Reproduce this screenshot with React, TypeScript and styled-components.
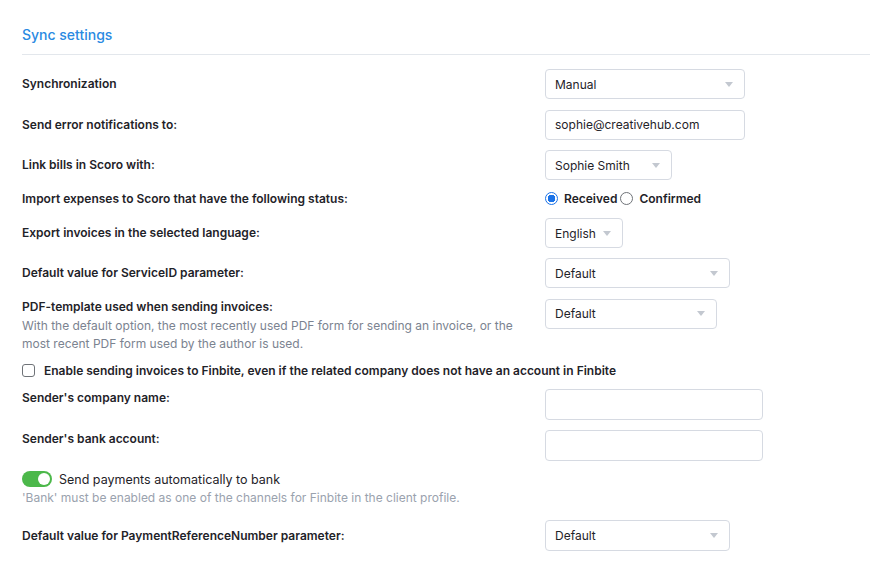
import { FC, ReactNode } from "react";
import styled, { createGlobalStyle } from "styled-components";

const GlobalStyle = createGlobalStyle`
  body {
    margin: 0;
    background: #ffffff;
    font-family: Inter, "Noto Sans", sans-serif;
    color: #1f2329;
  }
`;

const Page = styled.div`
  padding: 26px 20px 0 22px;
  width: 848px;
`;

const Header = styled.div`
  padding-bottom: 10px;
  border-bottom: 1px solid #e3e7ec;
  margin-bottom: 14px;
`;

const Title = styled.h2`
  margin: 0;
  font-size: 14px;
  line-height: 18px;
  font-weight: 500;
  color: #2a8ae2;
`;

const Row = styled.div<{ $align?: string; $gap?: number; $min?: number }>`
  display: grid;
  grid-template-columns: 523px 1fr;
  align-items: ${(p) => p.$align ?? "center"};
  min-height: ${(p) => p.$min ?? 30}px;
  margin-bottom: ${(p) => p.$gap ?? 10.5}px;
`;

const Label = styled.div<{ $pad?: number }>`
  font-size: 12px;
  line-height: 16px;
  font-weight: 600;
  color: #1f2329;
  padding-top: ${(p) => p.$pad ?? 0}px;
`;

const Hint = styled.div<{ $light?: boolean }>`
  font-size: 12px;
  line-height: 18px;
  font-weight: 400;
  color: ${(p) => (p.$light ? "#9aa2ae" : "#7b8390")};
  margin-top: 2px;
`;

const Box = styled.div<{ $w: number; $h?: number }>`
  box-sizing: border-box;
  width: ${(p) => p.$w}px;
  height: ${(p) => p.$h ?? 30}px;
  border: 1px solid #d6dae2;
  border-radius: 4px;
  padding: 0 9px;
  display: flex;
  align-items: center;
  justify-content: space-between;
  font-size: 12px;
  color: #1f2329;
  background: #fff;
`;

const Arrow = styled.span`
  width: 0;
  height: 0;
  border-left: 4px solid transparent;
  border-right: 4px solid transparent;
  border-top: 5px solid #c3c8d0;
  margin-right: 2px;
`;

const Select: FC<{ w: number; value: string; h?: number }> = ({ w, value, h }) => (
  <Box $w={w} $h={h}>
    <span>{value}</span>
    <Arrow />
  </Box>
);

const RadioGroup = styled.div`
  display: flex;
  align-items: center;
  height: 16px;
`;

const RadioDot = styled.span<{ $on?: boolean }>`
  box-sizing: border-box;
  width: 13px;
  height: 13px;
  border-radius: 50%;
  border: ${(p) => (p.$on ? "1.5px solid #1b73e8" : "1px solid #6f7378")};
  background: ${(p) =>
    p.$on ? "radial-gradient(circle, #1b73e8 0 3.6px, #fff 4px)" : "#fff"};
  margin-right: 6px;
`;

const RadioText = styled.span`
  font-size: 12px;
  font-weight: 600;
  margin-right: 3px;
`;

const CheckRow = styled.label`
  display: flex;
  align-items: center;
  height: 16px;
  margin-bottom: 10px;
`;

const CheckBox = styled.span`
  box-sizing: border-box;
  width: 13px;
  height: 13px;
  border: 1px solid #6f7378;
  border-radius: 3px;
  margin-right: 9px;
`;

const ToggleRow = styled.div`
  display: flex;
  align-items: center;
  height: 16px;
`;

const Toggle = styled.span`
  position: relative;
  box-sizing: border-box;
  width: 30px;
  height: 16px;
  border-radius: 8px;
  background: #4cb84a;
  margin-right: 7px;
  &::after {
    content: "";
    position: absolute;
    top: 2px;
    right: 2px;
    width: 12px;
    height: 12px;
    border-radius: 50%;
    background: #fff;
  }
`;

const ToggleText = styled.span`
  font-size: 12.5px;
  font-weight: 400;
  color: #1f2329;
`;

const ToggleBlock = styled.div`
  margin-top: 10px;
  margin-bottom: 13px;
`;

const Field: FC<{
  label: ReactNode;
  children: ReactNode;
  align?: string;
  gap?: number;
}> = ({ label, children, align, gap }) => (
  <Row $align={align} $gap={gap}>
    <div>{label}</div>
    <div>{children}</div>
  </Row>
);

export default function App() {
  return (
    <Page>
      <GlobalStyle />
      <Header>
        <Title>Sync settings</Title>
      </Header>

      <Field label={<Label>Synchronization</Label>}>
        <Select w={200} value="Manual" />
      </Field>
      <Field label={<Label>Send error notifications to:</Label>}>
        <Box $w={200}>sophie@creativehub.com</Box>
      </Field>
      <Field label={<Label>Link bills in Scoro with:</Label>}>
        <Select w={127} value="Sophie Smith" />
      </Field>
      <Row $min={16} $gap={11.5}>
        <Label>Import expenses to Scoro that have the following status:</Label>
        <RadioGroup>
          <RadioDot $on />
          <RadioText>Received</RadioText>
          <RadioDot />
          <RadioText>Confirmed</RadioText>
        </RadioGroup>
      </Row>
      <Field gap={10} label={<Label>Export invoices in the selected language:</Label>}>
        <Select w={78} value="English" />
      </Field>
      <Field label={<Label>Default value for ServiceID parameter:</Label>}>
        <Select w={185} value="Default" />
      </Field>
      <Field
        align="start"
        gap={10}
        label={
          <>
            <Label>PDF-template used when sending invoices:</Label>
            <Hint>
              With the default option, the most recently used PDF form for sending an invoice, or the
              <br />
              most recent PDF form used by the author is used.
            </Hint>
          </>
        }
      >
        <Select w={172} value="Default" />
      </Field>

      <CheckRow>
        <CheckBox />
        <Label>
          Enable sending invoices to Finbite, even if the related company does not have an account in Finbite
        </Label>
      </CheckRow>

      <Field align="start" label={<Label $pad={1}>Sender's company name:</Label>}>
        <Box $w={218} $h={31} />
      </Field>
      <Field align="start" gap={0} label={<Label $pad={1}>Sender's bank account:</Label>}>
        <Box $w={218} $h={31} />
      </Field>

      <ToggleBlock>
        <ToggleRow>
          <Toggle />
          <ToggleText>Send payments automatically to bank</ToggleText>
        </ToggleRow>
        <Hint $light>'Bank' must be enabled as one of the channels for Finbite in the client profile.</Hint>
      </ToggleBlock>

      <Field label={<Label>Default value for PaymentReferenceNumber parameter:</Label>}>
        <Select w={185} value="Default" h={31} />
      </Field>
    </Page>
  );
}
